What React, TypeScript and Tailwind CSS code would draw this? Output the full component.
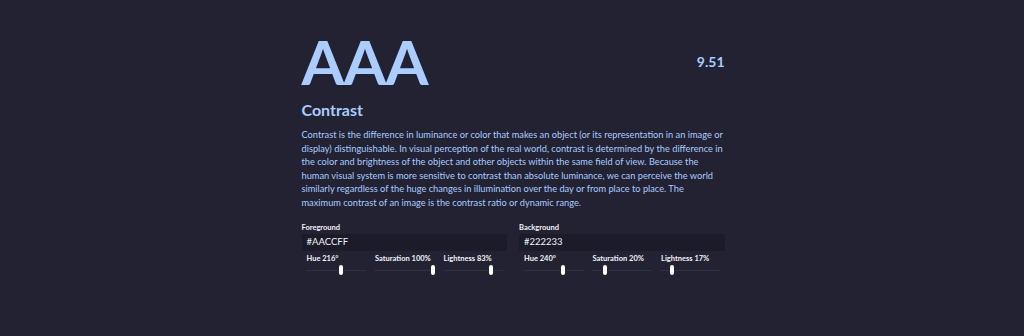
import React from "react";

const Slider = ({ label, value }: { label: string; value: number }) => (
  <div className="flex flex-col">
    <div className="text-[7.5px] font-bold leading-[10px] pl-[1px]">{label}</div>
    <div className="relative h-[12px] flex items-center">
      <div className="h-[1px] w-full bg-[#2f2f42]" />
      <div
        className="absolute top-[1px] h-[10px] w-[4px] rounded-[2px] bg-white"
        style={{ left: `calc(${value * 100}% - ${value * 4}px)` }}
      />
    </div>
  </div>
);

const ColorBlock = ({
  title,
  hex,
  sliders,
}: {
  title: string;
  hex: string;
  sliders: { label: string; value: number }[];
}) => (
  <div className="flex flex-col text-[#f2f2f8]">
    <div className="text-[7.5px] font-bold leading-[10px] mb-[1px]">{title}</div>
    <div className="h-[17px] bg-[#1b1b29] flex items-center px-[5px] text-[9.5px]">{hex}</div>
    <div className="grid grid-cols-3 gap-2 px-1 mt-[3px]">
      {sliders.map((s) => (
        <Slider key={s.label} {...s} />
      ))}
    </div>
  </div>
);

const lines = [
  "Contrast is the difference in luminance or color that makes an object (or its representation in an image or",
  "display) distinguishable. In visual perception of the real world, contrast is determined by the difference in",
  "the color and brightness of the object and other objects within the same field of view. Because the",
  "human visual system is more sensitive to contrast than absolute luminance, we can perceive the world",
  "similarly regardless of the huge changes in illumination over the day or from place to place. The",
  "maximum contrast of an image is the contrast ratio or dynamic range.",
];

export default function App() {
  return (
    <div
      className="w-[1024px] h-[336px] bg-[#222233] text-[#aaccff] flex justify-center"
      style={{ fontFamily: "Lato, 'Noto Sans', sans-serif" }}
    >
      <div className="w-[423px] ml-[2px] pt-[30px] flex flex-col">
        <div className="flex items-center justify-between">
          <div className="text-[62px] font-bold leading-[62px] tracking-[-1px]">AAA</div>
          <div className="text-[14px] font-bold">9.51</div>
        </div>
        <div className="text-[16px] font-bold mt-[8px] leading-[20px]">Contrast</div>
        <p className="text-[9.25px] leading-[13.5px] mt-[8px]">
          {lines.map((l) => (
            <span key={l} className="block whitespace-nowrap">
              {l}
            </span>
          ))}
        </p>
        <div className="grid grid-cols-2 gap-3 mt-[14px]">
          <ColorBlock
            title="Foreground"
            hex="#AACCFF"
            sliders={[
              { label: "Hue 216°", value: 0.6 },
              { label: "Saturation 100%", value: 1 },
              { label: "Lightness 83%", value: 0.83 },
            ]}
          />
          <ColorBlock
            title="Background"
            hex="#222233"
            sliders={[
              { label: "Hue 240°", value: 0.667 },
              { label: "Saturation 20%", value: 0.2 },
              { label: "Lightness 17%", value: 0.17 },
            ]}
          />
        </div>
      </div>
    </div>
  );
}
